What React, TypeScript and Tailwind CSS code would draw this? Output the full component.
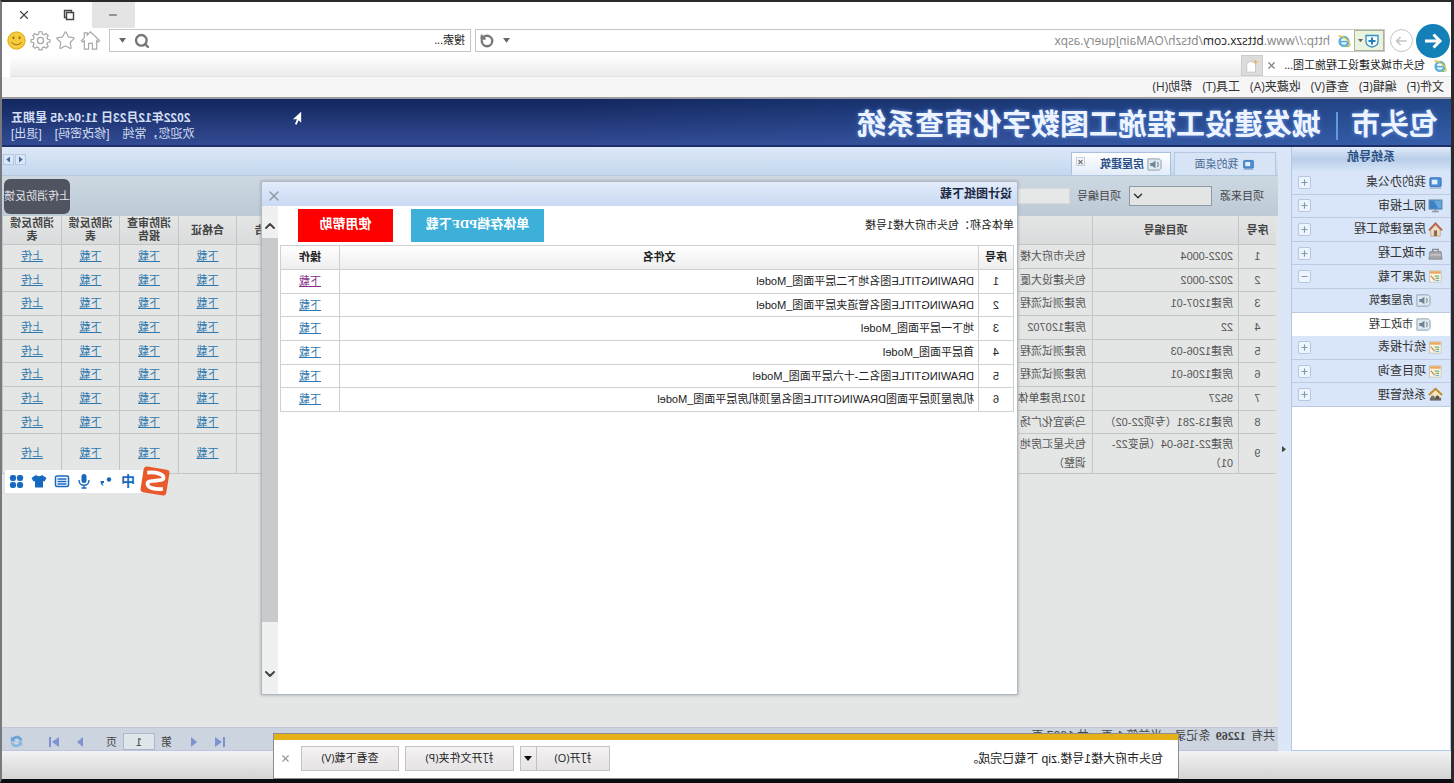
import React from 'react';
import { House, Star, Settings, Search, RotateCw, X, ChevronUp, ChevronDown, Copy, Minus, Plus } from 'lucide-react';

const BrowserIcon = ({ className }: { className: string }) => (
  <svg viewBox="0 0 16 16" className={className} aria-hidden="true">
    <circle cx="8" cy="8.5" r="5" fill="none" stroke="#58aee0" strokeWidth="2.8" />
    <path d="M4 8.7h9" stroke="#58aee0" strokeWidth="2" />
    <path d="M1.5 13.5C-.5 10 9 1 14.5 2.5" fill="none" stroke="#e0c63c" strokeWidth="1.5" />
    <path d="M1.5 13.5c2 1.5 4 .5 6 0" fill="none" stroke="#8fc26a" strokeWidth="1.5" />
  </svg>
);

type IconName = 'desk' | 'screen' | 'house' | 'case' | 'report' | 'sound' | 'system';

const NavIcon = ({ name, className }: { name: IconName; className: string }) => (
  <svg viewBox="0 0 16 16" className={className} aria-hidden="true">
    {name === 'desk' && (
      <>
        <rect x="2" y="3" width="12" height="9.5" rx="1" fill="#4b8fd8" stroke="#3a6fb5" />
        <rect x="6" y="5" width="6" height="5" fill="#e4f0fc" />
        <path d="M2 14h12" stroke="#9fb6d2" strokeWidth="1.5" />
      </>
    )}
    {name === 'screen' && (
      <>
        <rect x="1" y="2" width="14" height="10" fill="#3b82c4" stroke="#7f9ab5" />
        <path d="M2 3h8L5 11H2z" fill="#66a8de" />
        <path d="M8 12v2M4.5 14.5h7" stroke="#8494a6" strokeWidth="1.6" />
      </>
    )}
    {name === 'house' && (
      <>
        <path d="M3 8v7h10V8L8 3z" fill="#f0dcc0" stroke="#b99a7a" strokeWidth=".8" />
        <path d="M1 9l7-7.5L15 9" fill="none" stroke="#b5654a" strokeWidth="2" />
        <rect x="6.3" y="9" width="3.4" height="6" fill="#8a6a54" />
      </>
    )}
    {name === 'case' && (
      <>
        <path d="M5 6V3.5h6V6" fill="none" stroke="#85878c" strokeWidth="1.4" />
        <path d="M2 6h12l1 8H1z" fill="#a5a7ab" stroke="#7d8085" strokeWidth=".8" />
        <path d="M2 9.5h12" stroke="#d9dadc" />
      </>
    )}
    {name === 'report' && (
      <>
        <rect x="2" y="2" width="12.5" height="12" fill="#fbf6e6" stroke="#b8bfae" strokeWidth=".8" />
        <rect x="2.4" y="2.4" width="11.7" height="2.6" fill="#f0a55c" />
        <path d="M4 7.5h5M4 10h4" stroke="#6fb36f" strokeWidth="1.4" />
        <path d="M9 12l4-5" stroke="#d88445" strokeWidth="1.3" />
        <path d="M4 12.2h4" stroke="#79a9dd" strokeWidth="1.2" />
      </>
    )}
    {name === 'sound' && (
      <>
        <path d="M3 2h12v12H3l-2-2V4z" fill="#dfe8ee" stroke="#8aa0b0" />
        <path d="M12.500 6.500h-2L7 4v8l3.500-2.500h2z" fill="#6d8494" />
        <path d="M5 5.500q-2 2.500 0 5" fill="none" stroke="#7d95a5" strokeWidth="1.200" />
      </>
    )}
    {name === 'system' && (
      <>
        <path d="M3 8v5h10V8L8 3z" fill="#f4e6bd" />
        <path d="M1 8.500L8 2l7 6.500" fill="none" stroke="#c08a2c" strokeWidth="2" />
        <path d="M2 11.500h12v3H2z" fill="#6f6a66" />
        <circle cx="6" cy="11" r="2" fill="#58504a" />
        <circle cx="11" cy="11" r="2" fill="#77706a" />
      </>
    )}
  </svg>
);

const nav: { label: string; icon: IconName; state: 'closed' | 'open' | 'sub' | 'active' }[] = [
  { label: '我的办公桌', icon: 'desk', state: 'closed' },
  { label: '网上报审', icon: 'screen', state: 'closed' },
  { label: '房屋建筑工程', icon: 'house', state: 'closed' },
  { label: '市政工程', icon: 'case', state: 'closed' },
  { label: '成果下载', icon: 'report', state: 'open' },
  { label: '房屋建筑', icon: 'sound', state: 'sub' },
  { label: '市政工程', icon: 'sound', state: 'active' },
  { label: '统计报表', icon: 'report', state: 'closed' },
  { label: '项目查询', icon: 'report', state: 'closed' },
  { label: '系统管理', icon: 'system', state: 'closed' },
];

const projects = [
  ['2022-0004', '包头市府大楼'],
  ['2022-0002', '包头建设大厦'],
  ['房建1207-01', '房建测试流程'],
  ['22', '房建120702'],
  ['房建1206-03', '房建测试流程'],
  ['房建1206-01', '房建测试流程'],
  ['9527', '1021房建单体'],
  ['房建13-281（专项22-02）', '乌海宜化广场'],
  ['房建22-156-04（局变22-\n01）', '包头星汇房地\n调整）'],
];

const drawings = [
  'DRAWINGTITLE图名地下二层平面图_Model',
  'DRAWINGTITLE图名管道夹层平面图_Model',
  '地下一层平面图_Model',
  '首层平面图_Model',
  'DRAWINGTITLE图名二-十六层平面图_Model',
  '机房屋顶层平面图DRAWINGTITLE图名屋顶机房层平面图_Model',
];

const menus = ['文件(F)', '编辑(E)', '查看(V)', '收藏夹(A)', '工具(T)', '帮助(H)'];

function BrowserChrome() {
  return (
    <div className="bg-white font-['Open_Sans','Noto_Sans_CJK_SC',sans-serif]">
      <div className="flex h-[26px] justify-end text-[#444]">
        <button aria-label="最小化" className="flex w-[43px] items-center justify-center bg-[#e4e4e4]">
          <Minus className="size-3" strokeWidth={2} />
        </button>
        <button aria-label="还原" className="flex w-[45px] items-center justify-center">
          <svg viewBox="0 0 12 12" className="size-3" aria-hidden="true">
            <path d="M1.500 3.500h7v7h-7zM3.500 3V1.500h7v7H9" fill="none" stroke="currentColor" strokeWidth="1.400" />
          </svg>
        </button>
        <button aria-label="关闭" className="flex w-[45px] items-center justify-center">
          <X className="size-[14px]" strokeWidth={2} />
        </button>
      </div>
      <div className="flex h-[25px] items-center">
        <div className="relative flex w-[66px] items-center">
          <button aria-label="后退" className="absolute left-px flex size-[34px] items-center justify-center rounded-full bg-[#1480b8]">
            <svg viewBox="0 0 20 20" className="size-5 text-white" aria-hidden="true">
              <path d="M18 10H3M9.500 3.500L3 10l6.500 6.500" fill="none" stroke="currentColor" strokeWidth="3" />
            </svg>
          </button>
          <button aria-label="前进" className="ml-[38px] flex size-[23px] items-center justify-center rounded-full border border-[#c4c4c4]">
            <svg viewBox="0 0 20 20" className="size-4" aria-hidden="true">
              <path d="M3 10h12M10.500 5l5 5-5 5" fill="none" stroke="#c4c4c4" strokeWidth="2" />
            </svg>
          </button>
        </div>
        <div className="flex h-[23px] flex-1 items-center border border-[#c6c6c6]">
          <div className="flex h-full w-[30px] items-center justify-center gap-px border border-[#a9b49f] bg-[#e9f3de]">
            <svg viewBox="0 0 16 16" className="size-4" aria-hidden="true">
              <path d="M2 2.500h12v6c0 3-3 5-6 5.500-3-.5-6-2.500-6-5.500z" fill="#f4faff" stroke="#3b8fc0" strokeWidth="1.300" />
              <path d="M8 4.500v7M4.500 8h7" stroke="#2380c0" strokeWidth="2" />
            </svg>
            <svg viewBox="0 0 6 4" className="w-[5px]" aria-hidden="true"><path d="M0 0h6L3 4z" fill="#666" /></svg>
          </div>
          <BrowserIcon className="mx-[3px] size-[14px]" />
          <div className="ml-1 flex-1 text-[12px] text-[#858585]">
            http://www.<span className="text-[#222]">bttszx.com</span>/btszh/OAMainJquery.aspx
          </div>
          <svg viewBox="0 0 6 4" className="mr-[9px] w-[7px]" aria-hidden="true"><path d="M0 0h6L3 4z" fill="#666" /></svg>
          <button aria-label="刷新" className="mr-1 text-[#777]"><RotateCw className="size-[14px]" strokeWidth={4} /></button>
        </div>
        <div className="ml-1 flex h-[23px] w-[362px] items-center border border-[#c6c6c6] px-[5px]">
          <input aria-label="搜索" defaultValue="搜索..." className="min-w-0 flex-1 text-[11px] text-[#222] outline-none" />
          <button aria-label="搜索" className="text-[#777]"><Search className="size-4 -scale-x-100" strokeWidth={3.500} /></button>
          <svg viewBox="0 0 6 4" className="ml-2 mr-1 w-[7px]" aria-hidden="true"><path d="M0 0h6L3 4z" fill="#666" /></svg>
        </div>
        <div className="flex w-[107px] items-center gap-1 pl-2 text-[#a6a6a6]">
          <button aria-label="主页">
            <svg viewBox="0 0 22 22" className="size-[21px]" aria-hidden="true">
              <path d="M1.500 11L11 2l3.500 3.300V3h3v5.200L20.500 11l-1.300 1.400-1.700-1.500V20H13v-6H9v6H4.500v-9.100l-1.700 1.500z" fill="none" stroke="currentColor" strokeWidth="1.200" />
            </svg>
          </button>
          <button aria-label="收藏夹"><Star className="size-[21px]" strokeWidth={1.300} /></button>
          <button aria-label="工具">
            <svg viewBox="0 0 24 24" className="size-[21px]" fill="none" stroke="currentColor" strokeWidth="1.400" aria-hidden="true">
              <path d="M10.300 2h3.400l.5 2.600 2 .9 2.200-1.500 2.400 2.400-1.500 2.200.9 2 2.600.5v2.600l-2.600.5-.9 2 1.500 2.200-2.400 2.400-2.200-1.500-2 .9-.5 2.600h-3.400l-.5-2.600-2-.9-2.200 1.500-2.400-2.400 1.500-2.200-.9-2L1.200 13.700v-2.600l2.600-.5.9-2L3.200 6.400 5.600 4l2.200 1.500 2-.9z" />
              <circle cx="12" cy="12" r="3.500" />
            </svg>
          </button>
          <button aria-label="反馈">
            <svg viewBox="0 0 20 20" className="size-[19px]" aria-hidden="true">
              <circle cx="10" cy="10" r="9.500" fill="#f6cb3c" />
              <circle cx="10" cy="10" r="9" fill="none" stroke="#e2ab22" />
              <ellipse cx="6.800" cy="7" rx="1" ry="1.600" fill="#9a6a10" />
              <ellipse cx="13.200" cy="7" rx="1" ry="1.600" fill="#9a6a10" />
              <path d="M4.500 12q5.500 5 11 0" fill="none" stroke="#9a6a10" strokeWidth="1" />
            </svg>
          </button>
        </div>
      </div>
      <div className="mt-[2px] mr-2 flex h-[22px] items-center border-b border-[#e2e2e2] bg-linear-to-b from-white to-[#ebebeb] text-[11px] text-[#222]">
        <div className="flex h-full w-[188px] items-center bg-white pl-1">
          <BrowserIcon className="size-[14px]" />
          <span className="ml-2 flex-1 whitespace-nowrap">包头市城发建设工程施工图...</span>
          <button aria-label="关闭标签页" className="mr-[3px] text-[#777]"><X className="size-[11px]" strokeWidth={2.500} /></button>
        </div>
        <button aria-label="新建标签页" className="flex h-full w-[22px] items-center justify-center border border-[#ccc] bg-[#dcdcdc]">
          <svg viewBox="0 0 16 16" className="size-[14px]" aria-hidden="true">
            <path d="M4 3h7l3 3v9H4z" fill="#fff" stroke="#c4c4c4" />
            <path d="M4 1v5M1.500 3.500h5" stroke="#e8b45a" strokeWidth="1.500" />
          </svg>
        </button>
      </div>
      <nav className="flex h-[22px] items-center gap-[10px] border-b-2 border-[#9b9b9f] bg-[#f7f6f7] pl-[7px] text-[12px] text-[#333]">
        {menus.map((m) => (
          <button key={m} className="whitespace-nowrap">{m}</button>
        ))}
      </nav>
    </div>
  );
}

function Banner() {
  return (
    <header className="relative flex h-12 items-center border-b-2 border-[#1c2f6b] bg-linear-to-b from-[#12275f] to-[#334b94]">
      <div className="absolute inset-y-0 left-0 w-3/5 bg-linear-to-r from-[#3a78c8]/40 to-transparent" />
      <h1 className="relative flex items-center pt-[7px] pl-[13px] text-[29px] leading-none font-bold whitespace-nowrap text-[#eef4ff] [text-shadow:0_0_4px_#5a8ae0]">
        包头市
        <span className="mr-[15px] ml-[13px] h-7 w-[2px] bg-[#5f9be0]" />
        城发建设工程施工图数字化审查系统
      </h1>
      <div className="relative ml-auto pt-[7px] pr-[9px] text-[12px] leading-4 whitespace-nowrap text-[#d3def2]">
        <div className="pl-1 font-bold">2022年12月23日 11:04:45 星期五</div>
        <div className="flex justify-between">
          <span>欢迎您，常纯</span>
          <a href="#password">[修改密码]</a>
          <a href="#logout">[退出]</a>
        </div>
      </div>
    </header>
  );
}

function Sidebar() {
  return (
    <aside className="flex w-[160px] shrink-0 flex-col border-x border-b border-[#b4c8e4] bg-white">
      <h2 className="h-6 bg-linear-to-b from-[#e0ebfa] via-[#b9cee9] to-[#d5e4f8] text-center text-[12px] leading-5 font-bold text-[#2a4f86]">
        系统导航
      </h2>
      <ul className="grid h-[236px] auto-rows-fr text-[12px] text-[#333]">
        {nav.map((n, i) => {
          const top = n.state === 'closed' || n.state === 'open';
          return (
            <li key={i} className={n.state === 'active' ? 'flex bg-white' : 'flex border-b border-[#bccbe2] bg-[#d9e6f9]'}>
              <a href="#nav" className={top ? 'flex flex-1 items-center gap-[2px] pl-[7px]' : 'flex flex-1 items-center gap-[3px] pl-[19px] text-[11px]'}>
                <NavIcon name={n.icon} className="size-[15px]" />
                {n.label}
              </a>
              {top && (
                <button aria-label={n.label} className="mr-[6px] flex size-[13px] items-center justify-center self-center rounded-xs border border-[#b5c6df] bg-[#eef4fc] text-[#8297b3]">
                  {n.state === 'open' ? <Minus className="size-[9px]" strokeWidth={3} /> : <Plus className="size-[9px]" strokeWidth={3} />}
                </button>
              )}
            </li>
          );
        })}
      </ul>
    </aside>
  );
}

const th = 'border-r border-b border-[#c3c6c7] p-0 text-center leading-[13px] font-bold';
const td = 'border-r border-b border-[#c3c6c7] p-0';

const rowLink = 'text-[#2f78ad] underline';

function PagerArrow({ d, bar, label }: { d: string; bar?: string; label: string }) {
  return (
    <button aria-label={label}>
      <svg viewBox="0 0 12 12" className="size-3" aria-hidden="true">
        <path d={d} fill="#7f93d2" />
        {bar && <path d={bar} stroke="#7f93d2" strokeWidth="2" />}
      </svg>
    </button>
  );
}

function Workspace() {
  return (
    <main className="flex min-w-0 flex-1 flex-col bg-[#e4e6e5] text-[11px] text-[#555]">
      <div className="flex h-[29px] items-end gap-[3px] border-b border-[#b5c8de] bg-linear-to-b from-[#dde8f8] to-[#c3d8ef] pl-[2px]">
        <a href="#desktop" className="flex h-[23px] w-[102px] items-center justify-center gap-1 border border-b-0 border-[#b5c8e2] bg-[#d6e4f6] text-[#4a6a94]">
          <NavIcon name="desk" className="size-[13px]" />
          我的桌面
        </a>
        <div className="flex h-[23px] w-[100px] border border-b-0 border-[#a9c0de] bg-linear-to-b from-white to-[#e2ecf8] text-[#2a4f86]">
          <a href="#building" className="flex flex-1 items-center gap-[3px] pl-2 font-bold">
            <NavIcon name="sound" className="size-[15px]" />
            房屋建筑
          </a>
          <button aria-label="关闭房屋建筑" className="m-1 flex size-[9px] items-center justify-center border border-[#c5ced9] text-[#777]">
            <X className="size-2" strokeWidth={4} />
          </button>
        </div>
        <div className="mr-px mb-[10px] ml-auto flex gap-px">
          {['M8 2v8L3 6z', 'M4 2v8l5-4z'].map((d, i) => (
            <button key={d} aria-label={i ? '向右滚动' : '向左滚动'} className="flex size-[11px] items-center justify-center border border-[#b5c8e2] bg-[#dbe7f7]">
              <svg viewBox="0 0 12 12" className="size-[9px]" aria-hidden="true"><path d={d} fill="#4668a5" /></svg>
            </button>
          ))}
        </div>
      </div>
      <form className="flex h-10 items-center bg-linear-to-b from-[#cdd8e1] to-[#bdcad7] pr-[2px] pl-[14px] text-[#444]">
        <label htmlFor="source">项目来源</label>
        <div className="relative ml-2 flex h-5 w-[83px]">
          <select id="source" className="w-full appearance-none border border-[#8d9aa6] bg-[#e3e5e5]"><option></option></select>
          <ChevronDown className="pointer-events-none absolute top-[3px] right-[2px] size-[14px] text-[#333]" strokeWidth={2.500} />
        </div>
        <label htmlFor="number" className="ml-2">项目编号</label>
        <input id="number" className="ml-[7px] h-4 w-24 border border-[#d6d8da] bg-[#e6e8e8]" />
        <button type="button" className="ml-auto h-[35px] w-[66px] shrink-0 rounded-md bg-[#505460] text-center text-[11px] whitespace-nowrap text-[#e2e4e8]">
          上传消防反馈
        </button>
      </form>
      <div className="flex-1 pl-[2px]">
        <table className="w-full table-fixed border-separate border-spacing-0">
          <colgroup>
            <col className="w-[38px]" /><col className="w-[146px]" /><col /><col className="w-[58px]" /><col className="w-[58px]" /><col className="w-[59px]" /><col className="w-[58px]" /><col className="w-[59px]" />
          </colgroup>
          <thead className="bg-linear-to-b from-[#e4e6e6] to-[#d9dbdc] text-[#444]">
            <tr className="h-[29px]">
              <th className={th}>序号</th>
              <th className={th}>项目编号</th>
              <th className={th} />
              <th className={th}>报告</th>
              <th className={th}>合格证</th>
              <th className={th}>消防审查<br />报告</th>
              <th className={th}>消防反馈<br />表</th>
              <th className={th}>消防反馈<br />表</th>
            </tr>
          </thead>
          <tbody>
            {projects.map(([no, name], i) => (
              <tr key={i} className={i === 8 ? 'h-10' : i % 3 === 1 ? 'h-[23px]' : 'h-6'}>
                <td className={`${td} text-center`}>{i + 1}</td>
                <td className={`${td} pl-[5px] leading-[19px] whitespace-pre`}>{no}</td>
                <td className={`${td} pl-[6px] leading-[19px] whitespace-pre`}>{name}</td>
                <td className={td} />
                <td className={`${td} text-center`}><a href="#file" className={rowLink}>下载</a></td>
                <td className={`${td} text-center`}><a href="#file" className={rowLink}>下载</a></td>
                <td className={`${td} text-center`}><a href="#file" className={rowLink}>下载</a></td>
                <td className={`${td} text-center`}><a href="#file" className={rowLink}>上传</a></td>
              </tr>
            ))}
          </tbody>
        </table>
      </div>
      <div className="flex h-6 items-center border-y border-[#c3c3dc] bg-[#ccd4df] pr-[7px] pl-[3px] text-[12px] leading-4 text-[#444]">
        <span className="self-start whitespace-nowrap">共有 <b className="mx-[2px] font-['Liberation_Serif',serif]">12269</b> 条记录，当前第 1 页，共 1227 页</span>
        <div className="ml-auto flex items-center self-end">
          <div className="flex gap-[14px]">
            <PagerArrow label="首页" d="M11 1v10L4 6z" bar="M2 1v10" />
            <PagerArrow label="上一页" d="M9 1v10L3 6z" />
          </div>
          <label className="ml-4 flex items-center gap-[6px] text-[11px]">
            第
            <input defaultValue="1" className="h-[17px] w-8 border border-[#a9b9cc] bg-[#dfe6ea] text-center" />
            页
          </label>
          <div className="ml-5 flex gap-[14px]">
            <PagerArrow label="下一页" d="M3 1v10l6-5z" />
            <PagerArrow label="末页" d="M1 1v10l7-5z" bar="M10 1v10" />
          </div>
          <button aria-label="刷新列表" className="ml-6">
            <svg viewBox="0 0 16 16" className="size-[15px]" aria-hidden="true">
              <path d="M2 7c0-5 7-7 10-3l2-1v5H9l1.500-2C8 3.500 5 5 4.500 7.500z" fill="#6ba3d6" />
              <path d="M14 9c0 5-7 7-10 3l-2 1V8h5l-1.500 2C8 12.500 11 11 11.500 9z" fill="#87b8df" />
            </svg>
          </button>
        </div>
      </div>
    </main>
  );
}

const mth = 'border-r border-b border-[#d0d0d0] p-0 text-center font-bold';
const mtd = 'border-r border-b border-[#d0d0d0] p-0';

function DrawingDialog() {
  return (
    <section role="dialog" aria-label="设计图纸下载" className="absolute top-[179px] right-[259px] bottom-[84px] left-[433px] flex flex-col border border-[#b3b9c0] bg-white text-[11px] text-[#222] shadow-[0_0_3px_#9aa3ad]">
      <div className="flex h-6 items-center justify-between bg-linear-to-b from-[#e2ecfb] to-[#c9daf3] pr-1 pl-[5px]">
        <h2 className="text-[12px] font-bold text-[#1c2740]">设计图纸下载</h2>
        <button aria-label="关闭" className="mt-1 text-[#8e98a4]"><X className="size-4" strokeWidth={2} /></button>
      </div>
      <div className="flex min-h-0 flex-1">
        <div className="flex-1 pr-[2px] pl-[3px]">
          <div className="flex h-[39px] items-center">
            <p className="flex-1">单体名称：包头市府大楼1号楼</p>
            <div className="mr-4 flex gap-[18px] pr-[2px] font-['Liberation_Serif','Noto_Sans_CJK_SC',serif] text-[13px] font-bold text-white">
              <button className="h-[33px] w-[133px] bg-[#3cb0d8] pb-1">单体存档PDF下载</button>
              <button className="h-[33px] w-[95px] bg-[#fe0000] pb-1">使用帮助</button>
            </div>
          </div>
          <table className="w-full table-fixed border-separate border-spacing-0 border-t border-l border-[#d0d0d0]">
            <colgroup><col className="w-[35px]" /><col /><col className="w-[59px]" /></colgroup>
            <thead className="bg-linear-to-b from-white to-[#ededed]">
              <tr className="h-6">
                <th className={mth}>序号</th>
                <th className={mth}>文件名</th>
                <th className={mth}>操作</th>
              </tr>
            </thead>
            <tbody>
              {drawings.map((d, i) => (
                <tr key={d} className={i % 3 === 1 ? 'h-[23px]' : 'h-6'}>
                  <td className={`${mtd} text-center`}>{i + 1}</td>
                  <td className={`${mtd} pl-1`}>{d}</td>
                  <td className={`${mtd} text-center`}>
                    <a href="#drawing" className={i === 0 ? 'text-[#84308c] underline' : rowLink}>下载</a>
                  </td>
                </tr>
              ))}
            </tbody>
          </table>
        </div>
        <div className="flex w-4 flex-col items-center bg-[#f0f0f0] pt-3 pb-3 text-[#444]">
          <ChevronUp className="size-4 shrink-0" strokeWidth={3} />
          <div className="mt-1 mb-11 w-full flex-1 bg-[#c9cacb]" />
          <ChevronDown className="size-4 shrink-0" strokeWidth={3} />
        </div>
      </div>
    </section>
  );
}

const barButton = 'h-[25px] border border-[#c4c0c4] bg-linear-to-b from-[#f4f2f3] to-[#e6e3e4]';

function DownloadBar() {
  return (
    <section aria-label="下载通知" className="absolute right-[271px] bottom-0 left-[272px] flex h-[46px] items-center border border-[#8d8d8d] bg-white text-[12px] text-[#222]">
      <div className="absolute inset-x-0 top-0 h-[6px] bg-[#e6b117]" />
      <p className="flex-1 pt-[5px] pl-[15px]">包头市府大楼1号楼.zip 下载已完成。</p>
      <div className="flex pt-[5px] pr-[6px] font-['Open_Sans','Noto_Sans_CJK_SC',sans-serif] text-[11px]">
        <button className={`${barButton} w-[74px]`}>打开(O)</button>
        <button aria-label="更多打开方式" className={`${barButton} mr-[6px] flex w-4 items-center justify-center border-l-0`}>
          <svg viewBox="0 0 8 5" className="w-2" aria-hidden="true"><path d="M0 0h8L4 5z" fill="#111" /></svg>
        </button>
        <button className={`${barButton} mr-[6px] w-[109px]`}>打开文件夹(P)</button>
        <button className={`${barButton} mr-[10px] w-[98px]`}>查看下载(V)</button>
        <button aria-label="关闭通知" className="text-[#999]"><X className="size-[11px]" strokeWidth={2.500} /></button>
      </div>
    </section>
  );
}

function ImeBar() {
  return (
    <div className="absolute top-[464px] right-[3px] flex items-center">
      <svg viewBox="0 0 32 30" className="z-10 h-[30px] w-8" aria-hidden="true">
        <g transform="rotate(-9 16 15)">
          <rect x="3" y="2" width="26" height="26" rx="3" fill="#e8592b" />
          <path d="M25 8C16 5.500 8 7 8 11c0 3.500 15 3.500 15 7.500 0 4.500-8.500 5-16 3" fill="none" stroke="#fff" strokeWidth="3.800" />
        </g>
      </svg>
      <div className="-ml-1 flex h-[23px] items-center gap-[7px] bg-white pr-1 pl-2 text-[14px] leading-none font-bold text-[#1769c0]">
        <span>中</span>
        <svg viewBox="0 0 16 16" className="size-4" aria-hidden="true">
          <circle cx="5" cy="6.500" r="2.200" fill="#1769c0" />
          <path d="M10 8h3.500c0 3-1 4-3 5l1-3H10z" fill="#1769c0" />
        </svg>
        <svg viewBox="0 0 14 16" className="h-4 w-[14px]" aria-hidden="true">
          <rect x="4.500" y="1" width="5" height="9" rx="2.500" fill="#1769c0" />
          <path d="M2 7c0 7 10 7 10 0M7 12v3M4.500 15h5" fill="none" stroke="#1769c0" strokeWidth="1.400" />
        </svg>
        <svg viewBox="0 0 16 14" className="h-[14px] w-4" aria-hidden="true">
          <rect x="1.500" y="2" width="13" height="10.500" rx="1.500" fill="none" stroke="#1769c0" strokeWidth="1.500" />
          <path d="M3.500 5h9M3.500 7.500h9M3.500 10h9" stroke="#1769c0" strokeWidth="1.300" />
        </svg>
        <svg viewBox="0 0 16 16" className="size-4" aria-hidden="true">
          <path d="M5 2q3 2.500 6 0l4.500 3-2 3.500-1.500-.5v6.500H4V8l-1.500.5-2-3.500z" fill="#1769c0" />
        </svg>
        <svg viewBox="0 0 16 16" className="size-[15px]" aria-hidden="true">
          <g fill="#1769c0">
            <rect x="1" y="1" width="6.500" height="6.500" rx="2.500" /><rect x="8.500" y="1" width="6.500" height="6.500" rx="2.500" />
            <rect x="1" y="8.500" width="6.500" height="6.500" rx="2.500" /><rect x="8.500" y="8.500" width="6.500" height="6.500" rx="2.500" />
          </g>
        </svg>
      </div>
    </div>
  );
}

export default function App() {
  return (
    <div className="relative flex min-h-screen -scale-x-100 flex-col overflow-hidden border-t-2 border-r-2 border-b-4 border-l-[3px] border-[#2a2a2c] border-r-[#77797d] border-b-[#0b0d10] bg-[#dbe6f7] font-['Liberation_Sans','Noto_Sans_CJK_SC',sans-serif]">
      <BrowserChrome />
      <Banner />
      <div className="flex flex-1">
        <Sidebar />
        <div className="flex w-[13px] shrink-0 items-center justify-center">
          <svg viewBox="0 0 5 8" className="w-1" aria-hidden="true"><path d="M5 0v8L0 4z" fill="#444" /></svg>
        </div>
        <Workspace />
      </div>
      <footer className="h-7 shrink-0 border-t-2 border-[#eef3fa] bg-linear-to-b from-[#f0f0f0] to-[#d4d4d4]" />
      <div className="absolute inset-0">
        <DrawingDialog />
        <DownloadBar />
        <ImeBar />
        <svg viewBox="0 0 12 18" className="absolute top-[109px] right-[290px] h-[15px] w-[10px]" aria-hidden="true">
          <path d="M1 1v13l3-3 2.500 5.500 2-1L6 10h5z" fill="#fff" />
        </svg>
      </div>
    </div>
  );
}
